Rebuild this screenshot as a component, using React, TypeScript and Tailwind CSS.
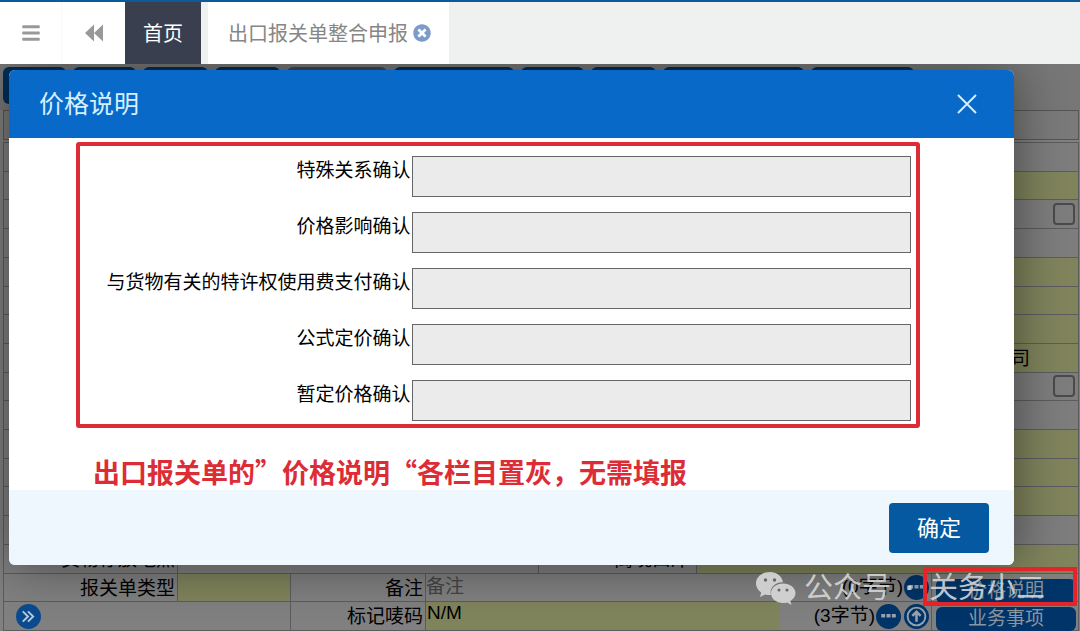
import type { ReactNode } from "react";
import { FaBars, FaTimesCircle } from "react-icons/fa";

const confirmFields = [
  { id: "special", label: "特殊关系确认" },
  { id: "influence", label: "价格影响确认" },
  { id: "royalty", label: "与货物有关的特许权使用费支付确认" },
  { id: "formula", label: "公式定价确认" },
  { id: "provisional", label: "暂定价格确认" },
];

const toolbarButtons = [
  "w-[63px] bg-[#002f5a]",
  "w-[63px] bg-[#002f5a]",
  "w-[65px] bg-[#002f5a]",
  "w-[65px] bg-[#002f5a]",
  "w-[100px] bg-[#3a4a5a]",
  "w-[120px] bg-[#002f5a]",
  "w-[63px] bg-[#002f5a]",
  "w-[65px] bg-[#002f5a]",
  "w-[141px] bg-[#002f5a]",
  "w-[103px] bg-[#002f5a]",
];

type FormRow = { tone: "gray" | "yellow"; checkbox?: string; value?: string };

const formRows: FormRow[] = [
  { tone: "gray" },
  { tone: "yellow" },
  { tone: "gray", checkbox: "row-check-1" },
  { tone: "gray" },
  { tone: "yellow" },
  { tone: "yellow" },
  { tone: "yellow" },
  { tone: "yellow", value: "司" },
  { tone: "gray", checkbox: "row-check-2" },
  { tone: "gray" },
  { tone: "yellow" },
  { tone: "yellow" },
  { tone: "yellow" },
  { tone: "gray" },
];

function Row({ children }: { children: ReactNode }) {
  return <div className="flex min-h-7 flex-1 basis-0 border-b border-[#5c5c60] leading-[30px]">{children}</div>;
}

function DotsButton({ label }: { label: string }) {
  return (
    <button type="button" aria-label={label} className="shrink-0">
      <svg viewBox="0 0 24 24" className="size-[25px]">
        <circle cx="12" cy="12" r="12" fill="#013468" />
        <path d="M5 9.5h3.8v3.4H5zM10.1 9.5h3.8v3.4h-3.8zM15.2 9.5h3.8v3.4h-3.8z" fill="#9aa3ad" />
      </svg>
    </button>
  );
}

function TabBar() {
  return (
    <header className="relative z-10 flex h-16 border-t-2 border-[#0d5a98] bg-[#eff1f0] text-xl">
      <button type="button" aria-label="菜单" className="flex w-[62px] items-center justify-center border-r border-[#f8f8f8] bg-white text-[#999]">
        <FaBars className="size-5" />
      </button>
      <button type="button" aria-label="向左" className="flex w-[63px] items-center justify-center bg-white text-[#999]">
        <svg viewBox="0 0 18 18" className="size-[18px]" fill="currentColor">
          <path d="M9 .5v17L0 9zM18 .5v17L9 9z" />
        </svg>
      </button>
      <a href="#home" className="flex w-[76px] items-center justify-center bg-[#393f4e] pt-[2px] text-white">
        首页
      </a>
      <div className="ml-[7px] flex items-center gap-[5px] bg-white pl-5 pr-[18px]">
        <a href="#declare" className="pt-[2px] text-[#868686]">出口报关单整合申报</a>
        <button type="button" aria-label="关闭标签" className="text-[#7d9bc8]">
          <FaTimesCircle className="size-[18px]" />
        </button>
      </div>
    </header>
  );
}

function DeclarationForm() {
  return (
    <main className="flex flex-1 flex-col bg-[#808080] text-[19px] text-black">
      <div className="flex h-[46px] items-start gap-[7px] bg-[#777] pl-[3px] pt-[3px]">
        {toolbarButtons.map((style, i) => (
          <div key={i} className={`h-[37px] rounded-md ${style}`} />
        ))}
      </div>
      <div className="ml-[3px] mr-px h-[30px] border border-[#555] bg-[#7a7a7a]" />
      <div className="ml-[3px] mr-px mt-[2px] flex flex-1 flex-col border-x border-t border-[#5c5c60]">
        {formRows.map((row, i) => (
          <Row key={i}>
            <div className="w-[174px] border-r border-[#5c5c60]" />
            <div className={`flex flex-1 items-center justify-end ${row.tone === "yellow" ? "bg-[#80845c]" : "bg-[#7d7d7d]"}`}>
              {row.value && <span className="mr-12 pt-[2px]">{row.value}</span>}
              {row.checkbox && (
                <input
                  id={row.checkbox}
                  type="checkbox"
                  aria-label="选择"
                  className="mr-[3px] size-[22px] appearance-none rounded-[4px] border-2 border-[#4a4a4a]"
                />
              )}
            </div>
          </Row>
        ))}
        <Row>
          <div className="w-[174px] border-r border-[#5c5c60] pr-[2px] text-right">货物存放地点</div>
          <div className="flex-1 border-r border-[#5c5c60]" />
          <div className="w-[158px] border-r border-[#5c5c60] pr-[6px] text-right">离境口岸</div>
          <div className="w-[381px] bg-[#80845c]" />
        </Row>
        <Row>
          <label htmlFor="decl-type" className="w-[174px] border-r border-[#5c5c60] pr-[2px] text-right">报关单类型</label>
          <input id="decl-type" className="w-[113px] border-r border-[#5c5c60] bg-[#80845c]" />
          <label htmlFor="remark" className="w-[135px] border-r border-[#5c5c60] pr-[2px] text-right">备注</label>
          <input id="remark" placeholder="备注" className="min-w-0 flex-1 placeholder:text-[#444]" />
          <div className="flex w-[152px] items-center justify-end gap-px border-r border-[#5c5c60] pr-[2px]">
            <span>(0字节)</span>
            <DotsButton label="编辑备注" />
          </div>
          <div className="w-[146px] py-[2px] pl-1 pr-[2px]">
            <button type="button" className="h-6 w-full rounded-md bg-[#013468] leading-6 text-[#8b959f]">价格说明</button>
          </div>
        </Row>
        <Row>
          <div className="flex w-[287px] items-center border-r border-[#5c5c60] pl-3">
            <button type="button" aria-label="展开">
              <svg viewBox="0 0 24 24" className="size-[25px]" fill="none">
                <circle cx="12" cy="12" r="12" fill="#0a4b90" />
                <path d="M6.500 7l5 5-5 5M11.500 7l5 5-5 5" stroke="#b9cbe0" strokeWidth="1.800" />
              </svg>
            </button>
          </div>
          <label htmlFor="marks" className="w-[135px] border-r border-[#5c5c60] pr-[2px] text-right">标记唛码</label>
          <input id="marks" defaultValue="N/M" className="min-w-0 flex-1 bg-[#80845c] pb-[6px] pl-px" />
          <div className="flex w-[152px] items-center justify-end gap-px border-r border-[#5c5c60] pr-[2px]">
            <span>(3字节)</span>
            <DotsButton label="编辑唛码" />
            <button type="button" aria-label="上传" className="ml-[2px] shrink-0">
              <svg viewBox="0 0 24 24" className="size-[25px]" fill="none">
                <circle cx="12" cy="12" r="12" fill="#013468" />
                <circle cx="12" cy="12" r="8.500" stroke="#9aa3ad" strokeWidth="1.800" />
                <path d="M12 17V8M8 11.500l4-4 4 4" stroke="#9aa3ad" strokeWidth="2.400" />
              </svg>
            </button>
          </div>
          <div className="w-[146px] py-[2px] pl-1 pr-[2px]">
            <button type="button" className="h-6 w-full rounded-md bg-[#013468] leading-6 text-[#8b959f]">业务事项</button>
          </div>
        </Row>
      </div>
    </main>
  );
}

function PriceDialog() {
  return (
    <section
      role="dialog"
      aria-labelledby="dialog-title"
      className="absolute left-[9px] right-[66px] top-[70px] overflow-hidden rounded-md bg-white shadow-[1px_1px_50px_rgba(0,0,0,0.45)]"
    >
      <div className="flex h-[68px] items-center justify-between bg-[#0869c9] pl-[30px] pr-[37px] text-[#d4f0ff]">
        <h2 id="dialog-title" className="pt-[2px] text-[25px]">价格说明</h2>
        <button type="button" aria-label="关闭">
          <svg viewBox="0 0 20 20" className="size-5" fill="none" stroke="currentColor" strokeWidth="1.900">
            <path d="M1 1l18 18M19 1L1 19" />
          </svg>
        </button>
      </div>
      <div className="pl-[67px] pr-[94px] pt-1">
        <div className="flex flex-col gap-[15px] rounded-[3px] border-4 border-[#dc2d36] pb-[3px] pr-[5px] pt-[10px]">
          {confirmFields.map((field) => (
            <div key={field.id} className="flex items-start">
              <label htmlFor={field.id} className="flex-1 pr-[2px] text-right text-[19px] leading-[30px] text-black">
                {field.label}
              </label>
              <input id={field.id} disabled className="h-[41px] w-3/5 border border-[#666] bg-[#ebebeb]" />
            </div>
          ))}
        </div>
      </div>
      <p className="mt-[26px] whitespace-nowrap pl-[84px] font-['Noto_Sans_CJK_SC',sans-serif] text-[27px] font-bold leading-9 text-[#dc2d36]">
        出口报关单的”价格说明“各栏目置灰，无需填报
      </p>
      <div className="flex h-[75px] items-center justify-end bg-[#eff7fe] pr-[25px]">
        <button type="button" className="h-[50px] w-[100px] rounded-[4px] bg-[#0559a0] pt-[2px] text-[22px] text-white">
          确定
        </button>
      </div>
    </section>
  );
}

function Watermark() {
  return (
    <div className="absolute bottom-[23px] right-[35px] flex items-center text-[29px] leading-10 text-[#d8d8d8]/90">
      <svg viewBox="0 0 40 33" className="mr-2 h-[33px] w-10">
        <path
          d="M14 0C6 0 0 5 0 11.5c0 3.700 2 6.800 5.200 9L4 25l5-2.600c1.600.500 3.300.700 5 .700h1C13 16 19 10 27 10.200 26 4 20.500 0 14 0z"
          fill="currentColor"
        />
        <path
          d="M27 11.500c-6.800 0-12 4.400-12 9.800s5.200 9.700 12 9.700c1.500 0 3-.200 4.300-.600L35.500 33l-1.100-4C37.500 27 39.500 24.500 39.500 21.300c0-5.400-5.500-9.800-12.500-9.800z"
          fill="currentColor"
        />
        <circle cx="9.500" cy="8" r="1.700" fill="#666" />
        <circle cx="18.500" cy="8" r="1.700" fill="#666" />
        <circle cx="23" cy="18" r="1.500" fill="#666" />
        <circle cx="31" cy="18" r="1.500" fill="#666" />
      </svg>
      <span>公众号</span>
      <span className="w-[38px] text-center font-bold">·</span>
      <span>关务小二</span>
    </div>
  );
}

export default function App() {
  return (
    <div className="relative flex min-h-screen flex-col overflow-hidden font-['Liberation_Sans','Noto_Sans_CJK_SC',sans-serif]">
      <TabBar />
      <DeclarationForm />
      <PriceDialog />
      <Watermark />
      <div className="absolute bottom-[25px] right-[3px] h-[39px] w-[154px] border-4 border-[#e4232b]" />
    </div>
  );
}
